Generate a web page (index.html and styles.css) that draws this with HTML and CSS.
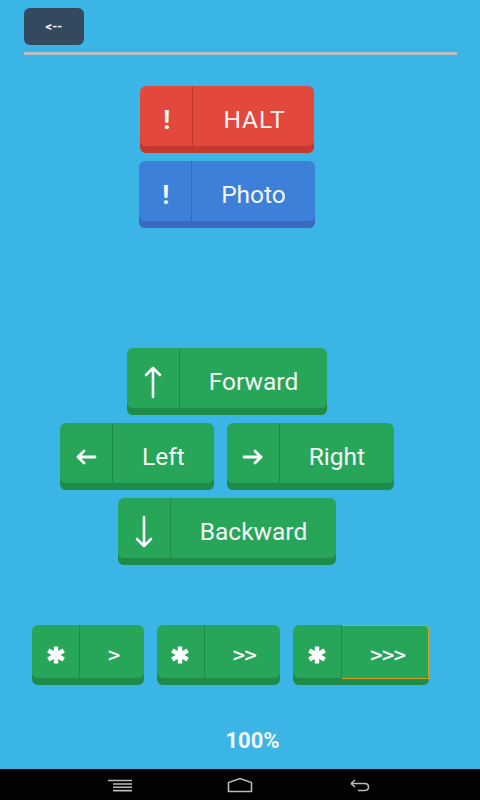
FILE: index.html
```html
<!DOCTYPE html>
<html>
<head>
<meta charset="utf-8">
<link rel="stylesheet" href="styles.css">
</head>
<body>
<div class="screen">
  <header class="topbar">
    <div class="back">&lt;--</div>
    <div class="rule"></div>
  </header>

  <section class="group alerts">
    <div class="btn red"><span class="ico bang">!</span><span class="lbl caps">HALT</span></div>
    <div class="btn blue"><span class="ico bang">!</span><span class="lbl">Photo</span></div>
  </section>

  <section class="group dpad">
    <div class="btn green">
      <span class="ico"><svg width="20" height="34" viewBox="0 0 20 34"><path d="M10 32V3M3 10L10 3L17 10" fill="none" stroke="#fff" stroke-width="2.6" stroke-linecap="round" stroke-linejoin="round"/></svg></span>
      <span class="lbl">Forward</span>
    </div>
    <div class="row">
      <div class="btn green">
        <span class="ico"><svg width="22" height="16" viewBox="0 0 22 16"><path d="M20 8H3M9 2L3 8L9 14" fill="none" stroke="#fff" stroke-width="2.8" stroke-linecap="round" stroke-linejoin="round"/></svg></span>
        <span class="lbl">Left</span>
      </div>
      <div class="btn green">
        <span class="ico"><svg width="22" height="16" viewBox="0 0 22 16"><path d="M2 8H19M13 2L19 8L13 14" fill="none" stroke="#fff" stroke-width="2.8" stroke-linecap="round" stroke-linejoin="round"/></svg></span>
        <span class="lbl">Right</span>
      </div>
    </div>
    <div class="btn green">
      <span class="ico"><svg width="20" height="34" viewBox="0 0 20 34"><path d="M10 2V31M3 24L10 31L17 24" fill="none" stroke="#fff" stroke-width="2.6" stroke-linecap="round" stroke-linejoin="round"/></svg></span>
      <span class="lbl">Backward</span>
    </div>
  </section>

  <section class="speeds">
    <div class="btn green small">
      <span class="ico"><svg class="star" width="20" height="18" viewBox="0 0 20 18"><path d="M10 0.5V17.5M2.3 4.5L17.7 13.5M2.3 13.5L17.7 4.5" stroke="#fff" stroke-width="4.4"/></svg></span>
      <span class="lbl">&gt;</span>
    </div>
    <div class="btn green small">
      <span class="ico"><svg class="star" width="20" height="18" viewBox="0 0 20 18"><path d="M10 0.5V17.5M2.3 4.5L17.7 13.5M2.3 13.5L17.7 4.5" stroke="#fff" stroke-width="4.4"/></svg></span>
      <span class="lbl">&gt;&gt;</span>
    </div>
    <div class="btn green small">
      <span class="ico wide"><svg class="star" width="20" height="18" viewBox="0 0 20 18"><path d="M10 0.5V17.5M2.3 4.5L17.7 13.5M2.3 13.5L17.7 4.5" stroke="#fff" stroke-width="4.4"/></svg></span>
      <span class="lbl focus">&gt;&gt;&gt;</span>
    </div>
  </section>

  <div class="pct">100%</div>
</div>

<nav class="sysbar">
  <svg width="480" height="31" viewBox="0 769 480 31">
    <g stroke="#b9b9b9" stroke-width="1.6" fill="none">
      <path d="M108 780.5H132M113 784H132M113 787.3H132M113 790.6H132"/>
      <path d="M228.5 791.5V782.5L240 778.5L251.5 782.5V791.5Z"/>
      <path d="M351 783.5H364.5Q368.5 783.5 368.5 787Q368.5 790.5 364.5 790.5H358M351 783.5L355 780M351 783.5L355 787"/>
    </g>
  </svg>
</nav>
</body>
</html>
```

FILE: styles.css
```css
html, body {
  margin: 0;
  padding: 0;
}

body {
  width: 480px;
  height: 800px;
  overflow: hidden;
  background: #000;
  font-family: Roboto, "Noto Sans", sans-serif;
}

.screen {
  height: 769px;
  background: #3ab5e5;
  display: flex;
  flex-direction: column;
}

.topbar {
  padding: 8px 23px 0 24px;
}

.back {
  width: 60px;
  height: 37px;
  border-radius: 6px;
  background: #34495e;
  color: #f2f4f5;
  font-weight: 700;
  font-size: 13px;
  display: flex;
  align-items: center;
  justify-content: center;
}

.rule {
  margin-top: 7px;
  height: 3px;
  background: #b4c2c7;
}

.group {
  display: flex;
  flex-direction: column;
  align-items: center;
  gap: 8px;
  padding: 0 50px 0 24px;
}

.alerts {
  margin-top: 31px;
}

.dpad {
  margin-top: 120px;
}

.row {
  display: flex;
  gap: 13px;
}

.btn {
  --face: #27a65a;
  --shade: #1f8b4b;
  --sep: #1e8a49;
  display: flex;
  height: 67px;
  border-radius: 6px;
  background: var(--face);
  box-shadow: inset 0 -7px 0 var(--shade);
  color: #f4f6f6;
  box-sizing: border-box;
}

.red {
  --face: #e2483b;
  --shade: #c53a2e;
  --sep: #c0392b;
}

.blue {
  --face: #3d80d9;
  --shade: #3a69bd;
  --sep: #3569c0;
}

.green {
  --face: #27a65a;
  --shade: #1f8b4b;
  --sep: #1e8a49;
}

.ico {
  width: 53px;
  box-sizing: border-box;
  border-right: 1px solid var(--sep);
  display: flex;
  align-items: center;
  justify-content: center;
}

.bang {
  font-size: 26px;
  font-weight: 700;
  padding-left: 1px;
}

.lbl {
  display: flex;
  align-items: center;
  justify-content: center;
  padding: 0 29px;
  font-size: 24.5px;
}

.caps {
  letter-spacing: 1px;
  padding: 0 28px 0 30px;
}

.speeds {
  margin-top: 60px;
  display: flex;
  gap: 13px;
  padding-left: 32px;
}

.small {
  height: 60px;
}

.small .ico {
  width: 48px;
}

.small .ico.wide {
  width: 49px;
}

.small .lbl {
  font-family: "DejaVu Sans", sans-serif;
  font-size: 17px;
  font-weight: 700;
  letter-spacing: -2.5px;
  padding: 0 25px 0 27px;
  position: relative;
}

.focus::after {
  content: "";
  position: absolute;
  left: 0;
  top: 0;
  right: 0;
  bottom: 6px;
  border: 1px solid #d6a31c;
  border-left: none;
  border-radius: 0 5px 0 0;
}

.pct {
  margin-top: 43px;
  padding-left: 25px;
  text-align: center;
  color: #f4f7f8;
  font-size: 22px;
  font-weight: 700;
  line-height: 26px;
}

.sysbar {
  height: 31px;
  background: #020204;
  display: block;
}

.sysbar svg {
  display: block;
}
```
